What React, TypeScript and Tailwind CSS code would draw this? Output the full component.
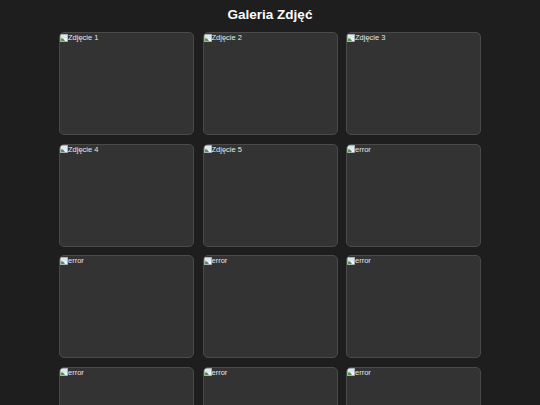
const photos = [
  "Zdjęcie 1",
  "Zdjęcie 2",
  "Zdjęcie 3",
  "Zdjęcie 4",
  "Zdjęcie 5",
  "error",
  "error",
  "error",
  "error",
  "error",
  "error",
  "error",
];

function BrokenIcon() {
  return (
    <svg width="8" height="8" viewBox="0 0 16 16" className="shrink-0">
      <rect x="1" y="1" width="14" height="14" fill="#f2f5f8" stroke="#b4bcc4" strokeWidth="1.5" />
      <rect x="2" y="2" width="12" height="7" fill="#dbe7f2" />
      <path d="M2 14 L2 9 Q5 7 8 11 L10 14 Z" fill="#4f9a3a" />
    </svg>
  );
}

function PhotoCard({ alt }: { alt: string }) {
  return (
    <div className="h-[103px] rounded-[5px] border border-[#4a4a4a] bg-[#333333] overflow-hidden">
      <div className="flex items-center text-[7.5px] leading-[9px] text-[#e6e6e6]">
        <BrokenIcon />
        <span>{alt}</span>
      </div>
    </div>
  );
}

export default function App() {
  return (
    <div className="min-h-[405px] bg-[#1e1e1e] pt-[7px] font-['Liberation_Sans',Arial,sans-serif]">
      <h1 className="text-center text-[13.5px] font-bold leading-[16px] text-white">
        Galeria Zdjęć
      </h1>
      <div className="mx-auto mt-[9px] grid w-[422px] grid-cols-3 gap-[8.5px]">
        {photos.map((alt, i) => (
          <PhotoCard key={i} alt={alt} />
        ))}
      </div>
    </div>
  );
}
